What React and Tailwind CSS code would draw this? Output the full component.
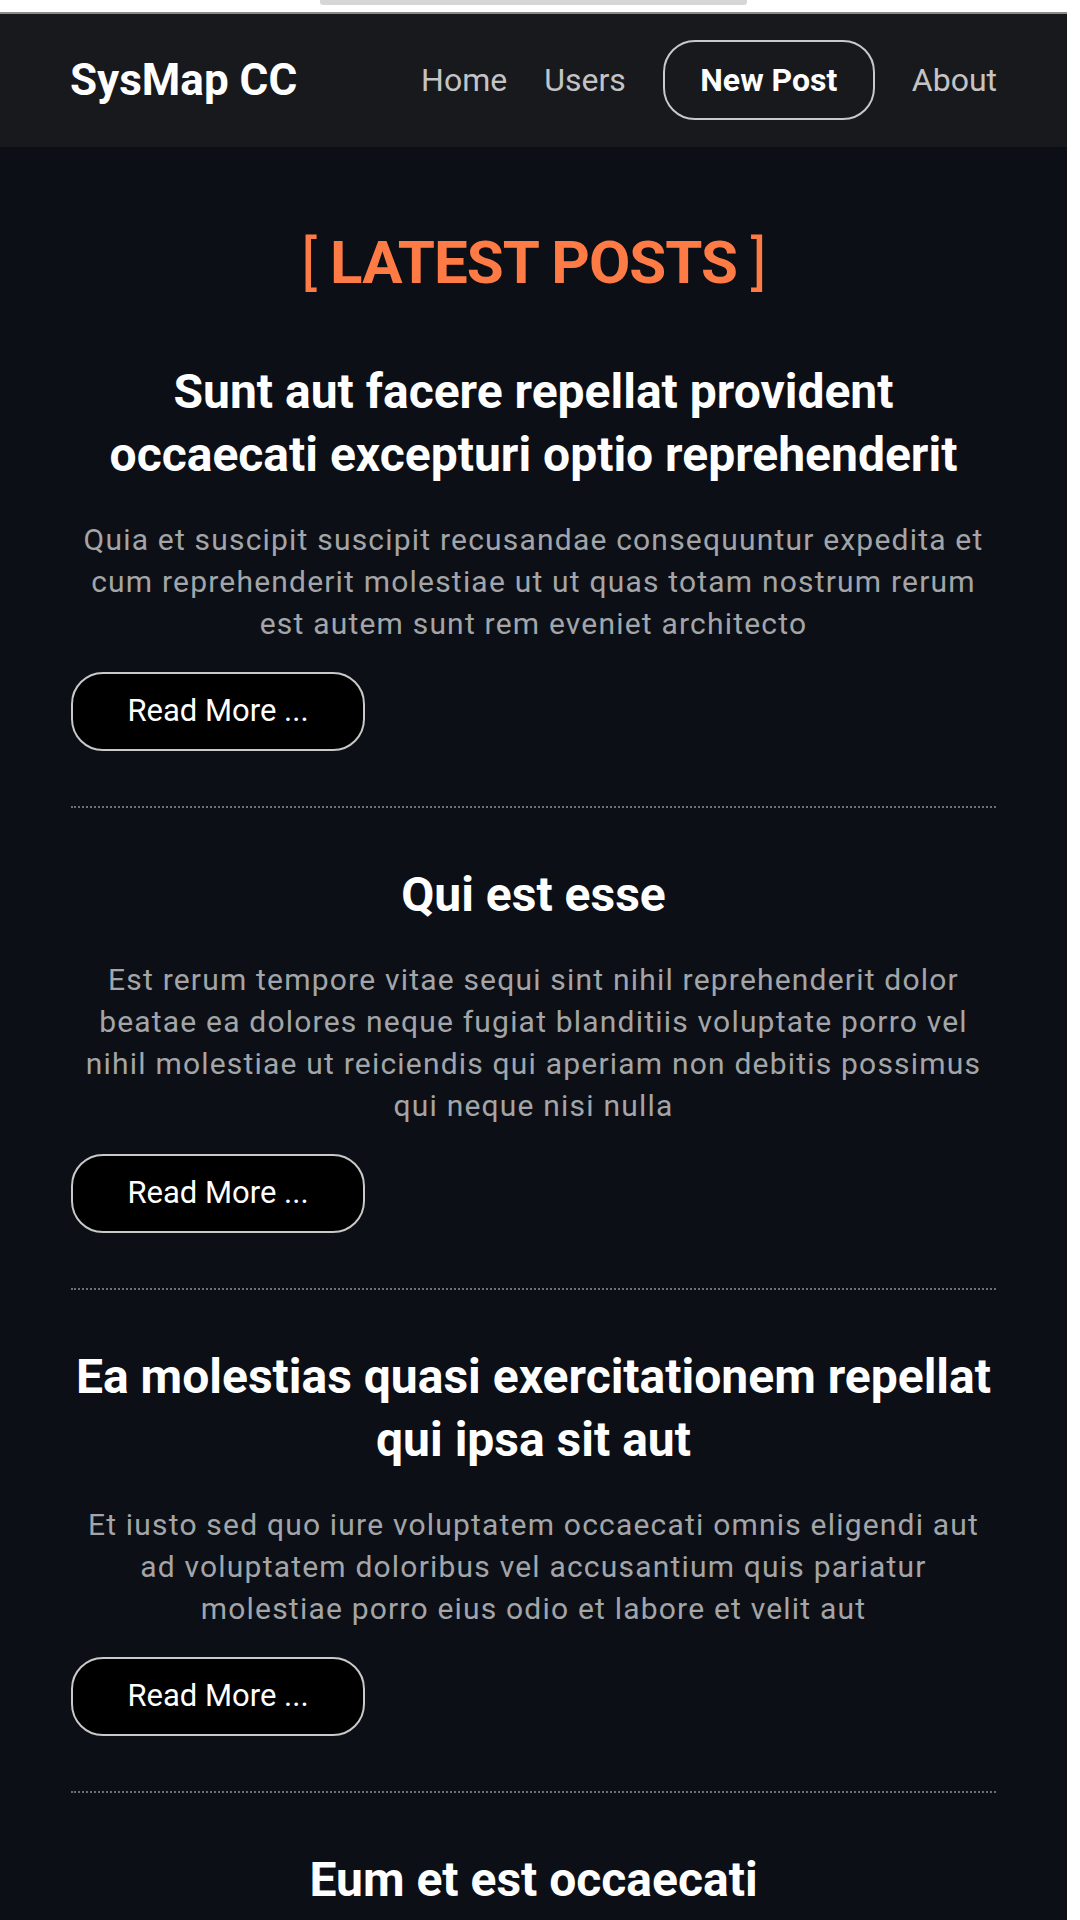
import React from "react";

const posts = [
  {
    id: 1,
    title: "Sunt aut facere repellat provident occaecati excepturi optio reprehenderit",
    body: "Quia et suscipit suscipit recusandae consequuntur expedita et cum reprehenderit molestiae ut ut quas totam nostrum rerum est autem sunt rem eveniet architecto",
  },
  {
    id: 2,
    title: "Qui est esse",
    body: "Est rerum tempore vitae sequi sint nihil reprehenderit dolor beatae ea dolores neque fugiat blanditiis voluptate porro vel nihil molestiae ut reiciendis qui aperiam non debitis possimus qui neque nisi nulla",
  },
  {
    id: 3,
    title: "Ea molestias quasi exercitationem repellat qui ipsa sit aut",
    body: "Et iusto sed quo iure voluptatem occaecati omnis eligendi aut ad voluptatem doloribus vel accusantium quis pariatur molestiae porro eius odio et labore et velit aut",
  },
  {
    id: 4,
    title: "Eum et est occaecati",
    body: "Ullam et saepe reiciendis voluptatem adipisci sit amet autem assumenda provident rerum culpa quis hic commodi nesciunt rem tenetur doloremque ipsam iure quis sunt voluptatem rerum illo velit",
  },
];

const PostCard = ({ post }) => {
  return (
    <article className="flex flex-col border-b-2 border-dotted border-[#6b6f76] pt-[55px] pb-[55px] first:pt-0">
      <h2 className="text-center text-[48px] font-bold leading-[63px] text-white">
        {post.title}
      </h2>
      <p className="mt-[33px] text-center text-[30px] leading-[42px] tracking-[1.2px] text-[#a3a5a8]">
        {post.body}
      </p>
      <button className="mt-[27px] h-[79px] w-[294px] rounded-[32px] border-2 border-[#c9c9c9] bg-black text-[31px] text-white">
        Read More ...
      </button>
    </article>
  );
};

const App = () => {
  return (
    <div className="h-[1920px] overflow-hidden bg-white pt-[12px] pr-[13px] font-['Roboto',sans-serif]">
      <div className="relative flex justify-center">
        <div className="absolute top-[-12px] h-[5px] w-[427px] rounded-b-[3px] bg-[#d6d6d6]" />
      </div>
      <div className="min-h-full bg-[#0c1016]">
        <header className="flex h-[135px] items-center justify-between bg-[#18191d] px-[70px] shadow-[inset_0_2px_0_#8a8a8a]">
          <a className="text-[44px] font-bold text-white">SysMap CC</a>
          <nav className="flex items-center gap-[37px] text-[32px] text-[#c4c4c4]">
            <a>Home</a>
            <a>Users</a>
            <a className="flex h-[80px] w-[212px] items-center justify-center rounded-[32px] border-2 border-[#c9c9c9] font-bold text-white">
              New Post
            </a>
            <a>About</a>
          </nav>
        </header>

        <main className="px-[71px]">
          <h1 className="pt-[80px] text-center text-[60px] font-bold leading-[72px] tracking-[-1px] text-[#ff7b45]">
            <span className="font-normal">[</span> LATEST POSTS <span className="font-normal">]</span>
          </h1>
          <div className="mt-[61px] flex flex-col">
            {posts.map((post) => (
              <PostCard key={post.id} post={post} />
            ))}
          </div>
        </main>
      </div>
    </div>
  );
};

export default App;
